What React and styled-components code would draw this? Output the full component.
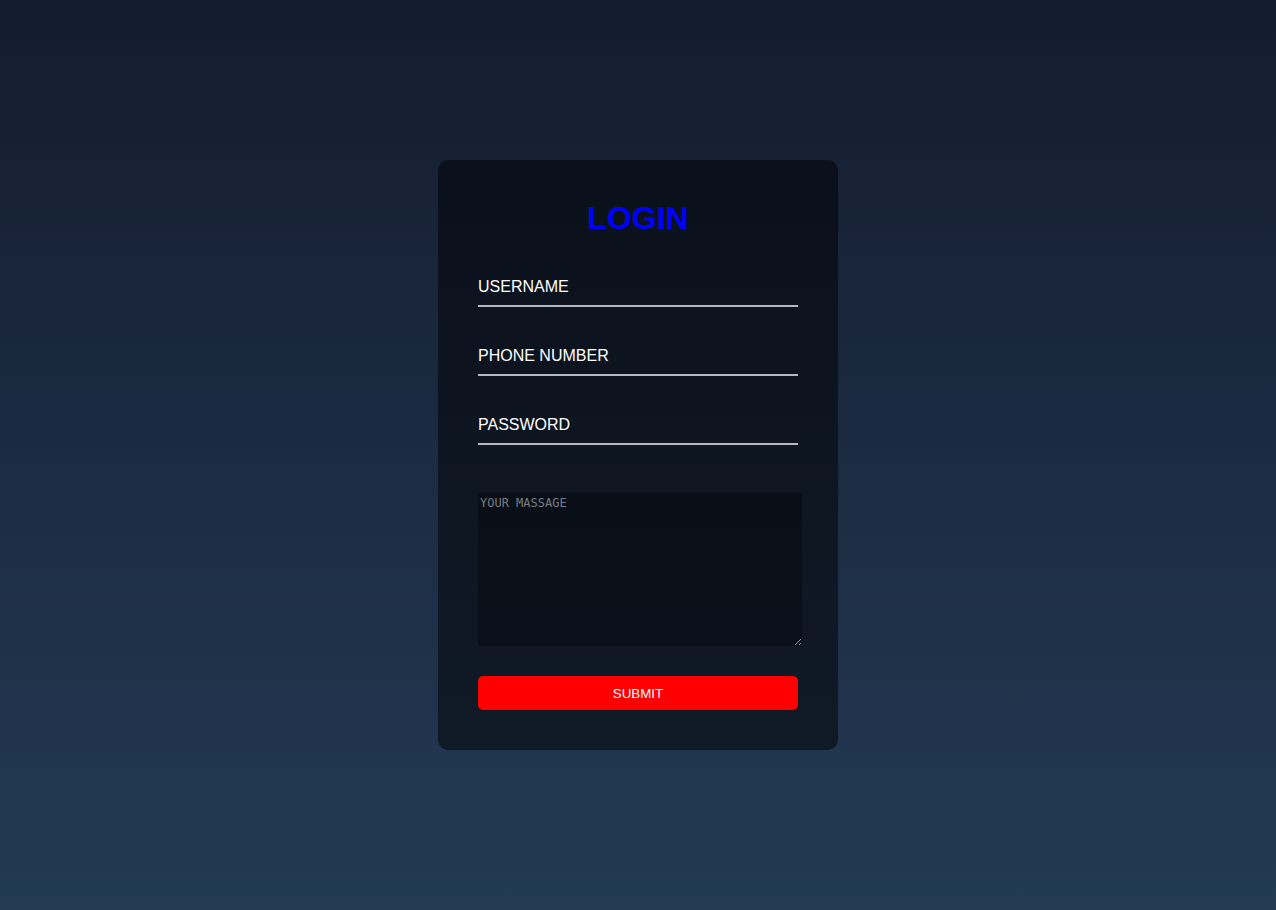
import styled, { createGlobalStyle } from "styled-components";

const GlobalStyle = createGlobalStyle`
  * {
    box-sizing: border-box;
  }
  body {
    margin: 0;
    font-family: "Liberation Sans", Arial, sans-serif;
  }
`;

const Page = styled.div`
  min-height: 910px;
  height: 100vh;
  display: flex;
  align-items: center;
  justify-content: center;
  background: linear-gradient(to bottom, #141c2f, #233a54);
`;

const Card = styled.form`
  width: 400px;
  padding: 40px;
  border-radius: 10px;
  background: rgba(0, 0, 0, 0.5);
  display: flex;
  flex-direction: column;
`;

const Title = styled.h2`
  margin: 0 0 30px;
  text-align: center;
  color: #0000ff;
  font-size: 32px;
  font-weight: 700;
  line-height: 37px;
`;

const Field = styled.input`
  display: block;
  width: 100%;
  height: 40px;
  margin: 0 0 29px;
  padding: 11px 0 9px;
  border: none;
  border-bottom: 2px solid #b4b8c0;
  background: transparent;
  outline: none;
  color: #fff;
  font-family: "Liberation Sans", Arial, sans-serif;
  font-size: 16px;
  &::placeholder {
    color: #fff;
    opacity: 1;
  }
`;

const Message = styled.textarea`
  display: block;
  box-sizing: content-box;
  width: 100%;
  height: 149px;
  margin: 19px 0 30px;
  padding: 3px 2px 1px;
  border: none;
  outline: none;
  background: rgba(0, 0, 0, 0.3);
  color: #ccc;
  font-family: "DejaVu Sans Mono", monospace;
  font-size: 12px;
  &::placeholder {
    color: #777c84;
  }
`;

const Submit = styled.button`
  width: 100%;
  height: 34px;
  border: none;
  border-radius: 5px;
  background: #ff0000;
  color: #fff;
  font-family: "Liberation Sans", Arial, sans-serif;
  font-size: 13.33px;
  cursor: pointer;
`;

export default function App() {
  return (
    <>
      <GlobalStyle />
      <Page>
        <Card onSubmit={(e) => e.preventDefault()}>
          <Title>LOGIN</Title>
          <Field type="text" placeholder="USERNAME" />
          <Field type="tel" placeholder="PHONE NUMBER" />
          <Field type="password" placeholder="PASSWORD" />
          <Message placeholder="YOUR MASSAGE" />
          <Submit type="submit">SUBMIT</Submit>
        </Card>
      </Page>
    </>
  );
}
